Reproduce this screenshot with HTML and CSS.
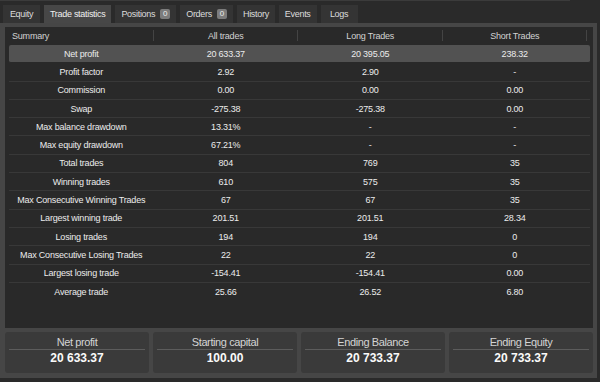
FILE: index.html
```html
<!DOCTYPE html>
<html lang="en">
<head>
    <meta charset="UTF-8">
    <title>Trade statistics</title>
    <link rel="stylesheet" href="styles.css">
</head>
<body>
    <div class="tabs">
        <div class="tab">Equity</div>
        <div class="tab active">Trade statistics</div>
        <div class="tab">Positions <span class="badge">0</span></div>
        <div class="tab">Orders <span class="badge">0</span></div>
        <div class="tab">History</div>
        <div class="tab">Events</div>
        <div class="tab">Logs</div>
    </div>
    <div class="panel">
        <div class="stats">
            <div class="row head">
                <div class="cell first">Summary</div>
                <div class="cell">All trades</div>
                <div class="cell">Long Trades</div>
                <div class="cell">Short Trades</div>
            </div>
            <div class="row selected">
                <div class="cell">Net profit</div><div class="cell">20 633.37</div><div class="cell">20 395.05</div><div class="cell">238.32</div>
            </div>
            <div class="row">
                <div class="cell">Profit factor</div><div class="cell">2.92</div><div class="cell">2.90</div><div class="cell">-</div>
            </div>
            <div class="row">
                <div class="cell">Commission</div><div class="cell">0.00</div><div class="cell">0.00</div><div class="cell">0.00</div>
            </div>
            <div class="row">
                <div class="cell">Swap</div><div class="cell">-275.38</div><div class="cell">-275.38</div><div class="cell">0.00</div>
            </div>
            <div class="row">
                <div class="cell">Max balance drawdown</div><div class="cell">13.31%</div><div class="cell">-</div><div class="cell">-</div>
            </div>
            <div class="row">
                <div class="cell">Max equity drawdown</div><div class="cell">67.21%</div><div class="cell">-</div><div class="cell">-</div>
            </div>
            <div class="row">
                <div class="cell">Total trades</div><div class="cell">804</div><div class="cell">769</div><div class="cell">35</div>
            </div>
            <div class="row">
                <div class="cell">Winning trades</div><div class="cell">610</div><div class="cell">575</div><div class="cell">35</div>
            </div>
            <div class="row">
                <div class="cell">Max Consecutive Winning Trades</div><div class="cell">67</div><div class="cell">67</div><div class="cell">35</div>
            </div>
            <div class="row">
                <div class="cell">Largest winning trade</div><div class="cell">201.51</div><div class="cell">201.51</div><div class="cell">28.34</div>
            </div>
            <div class="row">
                <div class="cell">Losing trades</div><div class="cell">194</div><div class="cell">194</div><div class="cell">0</div>
            </div>
            <div class="row">
                <div class="cell">Max Consecutive Losing Trades</div><div class="cell">22</div><div class="cell">22</div><div class="cell">0</div>
            </div>
            <div class="row">
                <div class="cell">Largest losing trade</div><div class="cell">-154.41</div><div class="cell">-154.41</div><div class="cell">0.00</div>
            </div>
            <div class="row last">
                <div class="cell">Average trade</div><div class="cell">25.66</div><div class="cell">26.52</div><div class="cell">6.80</div>
            </div>
        </div>
        <div class="cards">
            <div class="card">
                <div class="card-label">Net profit</div>
                <div class="card-value">20 633.37</div>
            </div>
            <div class="card">
                <div class="card-label">Starting capital</div>
                <div class="card-value">100.00</div>
            </div>
            <div class="card">
                <div class="card-label">Ending Balance</div>
                <div class="card-value">20 733.37</div>
            </div>
            <div class="card">
                <div class="card-label">Ending Equity</div>
                <div class="card-value">20 733.37</div>
            </div>
        </div>
    </div>
</body>
</html>
```

FILE: styles.css
```css
body {
    font-family: "Liberation Sans", Arial, sans-serif;
    background-color: #2a2a2a;
    color: #e6e6e6;
    margin: 0;
    width: 600px;
    height: 382px;
    overflow: hidden;
}
.tabs {
    display: flex;
    gap: 4px;
    height: 23px;
    box-sizing: border-box;
    padding: 4px 0 0 3px;
    margin-right: 30px;
    border-top: 1px solid #3b3b3b;
}
.tab {
    display: flex;
    align-items: center;
    justify-content: center;
    gap: 5px;
    min-width: 37px;
    box-sizing: border-box;
    height: 18px;
    padding: 0 6px;
    background-color: #343434;
    color: #dcdcdc;
    font-size: 9px;
    letter-spacing: -0.3px;
}
.tab.active {
    background-color: #474747;
    color: #f0f0f0;
}
.badge {
    display: inline-block;
    min-width: 10px;
    height: 10px;
    line-height: 10px;
    border-radius: 2px;
    background-color: #7c7c7c;
    color: #eee;
    text-align: center;
    font-size: 8px;
    letter-spacing: 0;
}
.panel {
    background-color: #464646;
    margin-right: 3px;
    padding: 4px 4px 5px 5px;
}
.stats {
    background-color: #292929;
    height: 301px;
    box-sizing: border-box;
    padding: 0 3px 0 4px;
}
.row {
    display: grid;
    grid-template-columns: repeat(4, 144.5px);
    height: 18.3px;
    box-sizing: border-box;
    border-bottom: 1px solid #383838;
    font-size: 9px;
    letter-spacing: -0.2px;
    color: #ececec;
}
.cell {
    display: flex;
    align-items: center;
    justify-content: center;
    position: relative;
}
.row.head {
    height: 18px;
    border-bottom: none;
    color: #d2d2d2;
}
.row.head .cell::after {
    content: "";
    position: absolute;
    right: 0;
    top: 3px;
    bottom: 4px;
    width: 1px;
    background-color: #444;
}
.row.head .cell.first {
    justify-content: flex-start;
    padding-left: 3px;
}
.row.selected {
    background-color: #525252;
    border-radius: 2px;
    border-bottom-color: #292929;
}
.row.last {
    border-bottom: none;
}
.cards {
    display: flex;
    gap: 4px;
    margin-top: 4px;
}
.card {
    flex: 1;
    height: 41px;
    box-sizing: border-box;
    padding: 3px 4px 0;
    background-color: #3a3a3a;
    border-radius: 3px;
    text-align: center;
}
.card-label {
    height: 14px;
    line-height: 14px;
    border-bottom: 1px solid #5c5c5c;
    font-size: 11px;
    letter-spacing: -0.4px;
    color: #d4d4d4;
}
.card-value {
    line-height: 17px;
    font-size: 12px;
    font-weight: bold;
    color: #fafafa;
}
```
